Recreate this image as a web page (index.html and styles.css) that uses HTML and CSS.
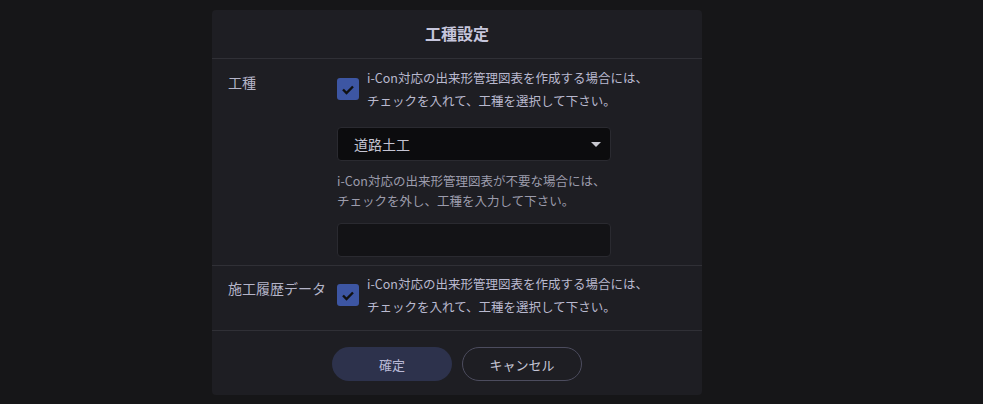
FILE: index.html
```html
<!DOCTYPE html>
<html lang="ja">
<head>
  <meta charset="UTF-8">
  <title>工種設定</title>
  <link rel="stylesheet" href="styles.css">
</head>
<body>

  <div class="dialog">
    <div class="dialog-header">工種設定</div>

    <div class="row row-main">
      <div class="row-label">工種</div>
      <div class="row-body">
        <label class="check">
          <span class="check-box">
            <svg width="14" height="11" viewBox="0 0 14 11"><path d="M2 5.5 L5.5 9 L12 2.5" fill="none" stroke="#111" stroke-width="2.4"/></svg>
          </span>
          <span class="check-text">i-Con対応の出来形管理図表を作成する場合には、<br>チェックを入れて、工種を選択して下さい。</span>
        </label>

        <div class="select">
          <span>道路土工</span>
          <span class="select-arrow"></span>
        </div>

        <p class="help">i-Con対応の出来形管理図表が不要な場合には、<br>チェックを外し、工種を入力して下さい。</p>

        <input type="text" class="text-input">
      </div>
    </div>

    <div class="row row-sub">
      <div class="row-label">施工履歴データ</div>
      <div class="row-body">
        <label class="check">
          <span class="check-box">
            <svg width="14" height="11" viewBox="0 0 14 11"><path d="M2 5.5 L5.5 9 L12 2.5" fill="none" stroke="#111" stroke-width="2.4"/></svg>
          </span>
          <span class="check-text">i-Con対応の出来形管理図表を作成する場合には、<br>チェックを入れて、工種を選択して下さい。</span>
        </label>
      </div>
    </div>

    <div class="actions">
      <button type="button" class="btn btn-primary">確定</button>
      <button type="button" class="btn btn-outline">キャンセル</button>
    </div>
  </div>

</body>
</html>
```

FILE: styles.css
```css
body {
  font-family: "Noto Sans CJK JP", "Noto Sans", sans-serif;
  background-color: #161618;
  margin: 0;
  padding: 10px 0 0 0;
  color: #b9b9cf;
}

.dialog {
  width: 490px;
  height: 385px;
  margin-left: 212px;
  background: #1e1e23;
  border-radius: 4px;
  box-sizing: border-box;
  display: flex;
  flex-direction: column;
}

.dialog-header {
  height: 48px;
  line-height: 46px;
  text-align: center;
  font-size: 16px;
  font-weight: 700;
  color: #c6c6dc;
  border-bottom: 1px solid #303036;
}

.row {
  display: flex;
  border-bottom: 1px solid #303036;
}

.row-main {
  padding: 7px 0 8px 0;
}

.row-sub {
  padding: 6px 0 12px 0;
}

.row-label {
  flex: none;
  width: 125px;
  padding: 5px 0 0 16px;
  box-sizing: border-box;
  font-size: 14px;
  line-height: 23px;
  color: #b4b4c8;
  white-space: nowrap;
}

.row-body {
  width: 274px;
  display: flex;
  flex-direction: column;
}

.check {
  display: flex;
  align-items: center;
  gap: 8px;
  width: 340px;
}

.check-box {
  width: 22px;
  height: 22px;
  flex: none;
  border-radius: 3px;
  background: #3d56a3;
  display: flex;
  align-items: center;
  justify-content: center;
}

.check-text {
  font-size: 12.5px;
  line-height: 23px;
  color: #b9b9cf;
  white-space: nowrap;
}

.select {
  margin-top: 15px;
  height: 34px;
  box-sizing: border-box;
  border: 1px solid #2a2a30;
  border-radius: 4px;
  background: #0c0c0e;
  display: flex;
  align-items: center;
  justify-content: space-between;
  padding: 0 9px 0 16px;
  font-size: 14px;
  color: #c4c4d2;
}

.select-arrow {
  width: 0;
  height: 0;
  border-left: 5px solid transparent;
  border-right: 5px solid transparent;
  border-top: 5px solid #c8c8d0;
}

.help {
  margin: 10px 0 0 0;
  font-size: 12.5px;
  line-height: 19.5px;
  color: #9c9cac;
  white-space: nowrap;
}

.text-input {
  margin-top: 13px;
  height: 34px;
  box-sizing: border-box;
  border: 1px solid #2a2a30;
  border-radius: 4px;
  background: #131316;
  outline: none;
}

.actions {
  display: flex;
  justify-content: center;
  gap: 10px;
  padding-top: 16px;
}

.btn {
  width: 120px;
  height: 34px;
  border-radius: 17px;
  font-family: inherit;
  font-size: 13px;
  color: #b9b9d6;
  cursor: pointer;
}

.btn-primary {
  background: #2d324c;
  border: none;
}

.btn-outline {
  background: transparent;
  border: 1px solid #4c4c5e;
  color: #c6c6d6;
}
```
